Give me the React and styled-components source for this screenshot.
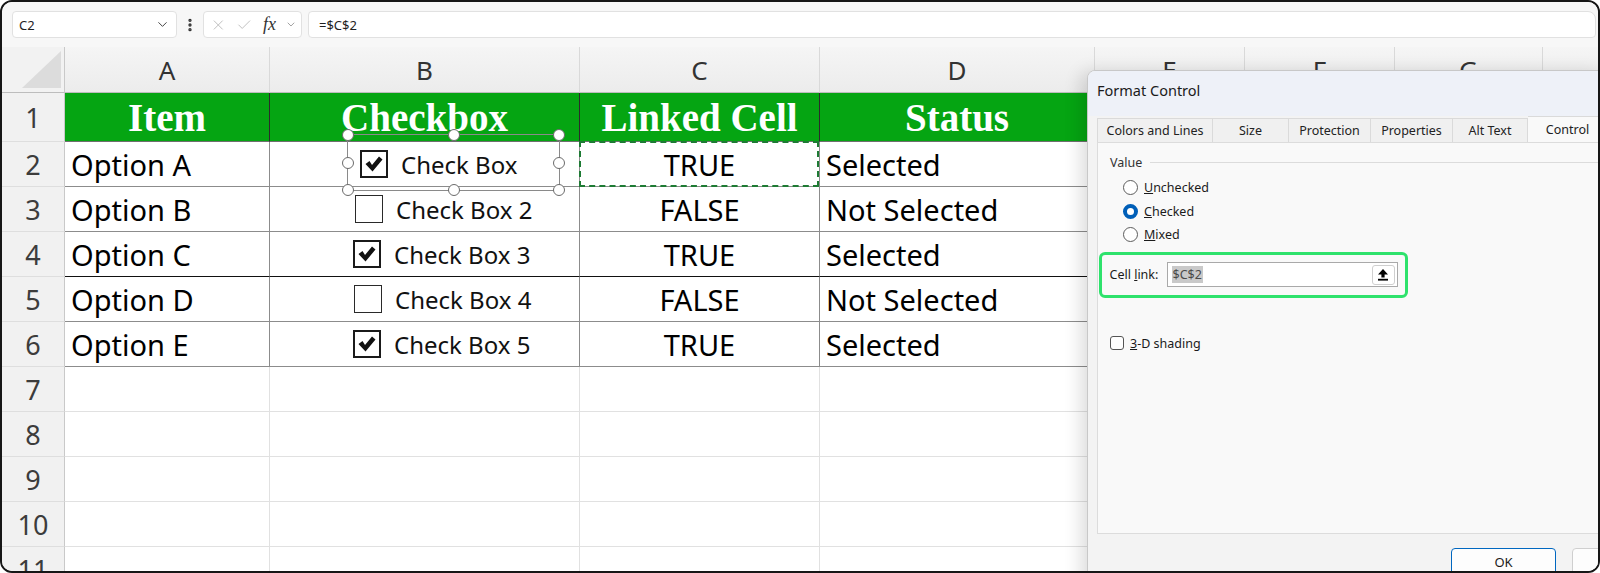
import React from "react";
import styled, { createGlobalStyle } from "styled-components";
import { ChevronDown, EllipsisVertical, X, Check } from "lucide-react";

const GlobalStyle = createGlobalStyle`
  html, body {
    margin: 0;
    padding: 0;
    background: #fff;
  }
  body {
    font-family: "Noto Sans", "Open Sans", sans-serif;
  }
  * {
    box-sizing: border-box;
  }
`;

const Frame = styled.div`
  position: relative;
  width: 1600px;
  height: 573px;
  border: 2px solid #161616;
  border-radius: 12px;
  overflow: hidden;
  background: #fff;
`;

/* ---------- formula bar ---------- */

const FormulaBar = styled.div`
  display: flex;
  align-items: center;
  height: 45px;
  padding: 0 0 0 10px;
  background: #f7f7f7;
  font-size: 13px;
  color: #1f1f1f;
`;

const Field = styled.div`
  display: flex;
  align-items: center;
  height: 27px;
  background: #fff;
  border: 1px solid #e1e1e1;
  border-radius: 4px;
`;

const NameBox = styled(Field)`
  width: 165px;
  padding: 0 6px;
  justify-content: space-between;
`;

const Dots = styled.div`
  width: 26px;
  display: flex;
  justify-content: center;
  color: #333;
`;

const FxBox = styled(Field)`
  width: 99px;
  padding: 0 4px 0 6px;
  gap: 9px;
  color: #b8b8b8;
`;

const Fx = styled.span`
  font-family: "Liberation Serif", serif;
  font-style: italic;
  font-size: 18px;
  color: #333;
  margin-left: 2px;
`;

const FormulaInput = styled(Field)`
  flex: 1;
  margin: 0 2px 0 6px;
  border-radius: 4px 8px 4px 4px;
  padding-left: 10px;
`;

/* ---------- sheet ---------- */

const Sheet = styled.div`
  display: grid;
  grid-template-columns: 63px 205px 310px 240px 275px 150px 150px 148px 150px;
  grid-template-rows: 46px 49px repeat(10, 45px);
`;

const Corner = styled.div`
  position: relative;
  background: #f2f2f2;
  border-right: 1px solid #c9c9c9;
  border-bottom: 1px solid #bdbdbd;

  &::after {
    content: "";
    position: absolute;
    right: 3px;
    bottom: 4px;
    width: 39px;
    height: 37px;
    background: #dcdcdc;
    clip-path: polygon(100% 0, 100% 100%, 0 100%);
  }
`;

const ColHead = styled.div`
  display: flex;
  align-items: center;
  justify-content: center;
  background: linear-gradient(#f5f5f5, #ececec);
  border-right: 1px solid #d9d9d9;
  border-bottom: 1px solid #bdbdbd;
  font-size: 26px;
  color: #333;
`;

const RowNum = styled.div`
  display: flex;
  align-items: center;
  justify-content: center;
  background: #f1f1f1;
  border-right: 1px solid #c9c9c9;
  border-bottom: 1px solid #dedede;
  font-size: 27px;
  color: #3c3c3c;
`;

const HeadCell = styled.div`
  display: flex;
  align-items: center;
  justify-content: center;
  background: #05a512;
  border-right: 1px solid #2b2b2b;
  border-bottom: 1px solid #6f6f6f;
  font-family: "Liberation Serif", "DejaVu Serif", serif;
  font-weight: 700;
  font-size: 39px;
  color: #fff;
  white-space: nowrap;
`;

const Cell = styled.div`
  position: relative;
  display: flex;
  align-items: center;
  justify-content: ${({ $center }) => ($center ? "center" : "flex-start")};
  padding-left: ${({ $center }) => ($center ? "0" : "6px")};
  border-right: 1px solid ${({ $table }) => ($table ? "#8c8c8c" : "#e1e1e1")};
  border-bottom: 1px solid
    ${({ $table, $dark }) => ($dark ? "#111" : $table ? "#8c8c8c" : "#e1e1e1")};
  font-size: 29px;
  color: #000;
  white-space: nowrap;
`;

const CheckCell = styled(Cell)`
  padding-left: ${({ $indent }) => $indent}px;
  gap: 13px;
  font-size: 24px;
  color: #111;
`;

const Box = styled.span`
  width: 28px;
  height: 28px;
  flex: none;
  display: flex;
  align-items: center;
  justify-content: center;
  border: ${({ $on }) => ($on ? "2px solid #1a1a1a" : "1.5px solid #2a2a2a")};
  background: #fff;
`;

const Selection = styled.div`
  position: absolute;
  left: 77px;
  top: -8px;
  width: 213px;
  height: 57px;
  border: 1px solid #8a8a8a;
  pointer-events: none;
`;

const Handle = styled.span`
  position: absolute;
  left: ${({ $x }) => $x}%;
  top: ${({ $y }) => $y}%;
  width: 12px;
  height: 12px;
  border-radius: 50%;
  background: #fff;
  border: 1.5px solid #6b6b6b;
  transform: translate(-50%, -50%);
`;

const Marquee = styled.div`
  position: absolute;
  inset: -1px 0 -1px -1px;
  border: 2px dashed #1e7b34;
`;

/* ---------- dialog ---------- */

const Dialog = styled.div`
  position: absolute;
  left: 1085px;
  top: 68px;
  width: 520px;
  height: 520px;
  background: #f3f3f3;
  border: 1px solid #c8c8c8;
  border-radius: 8px 0 0 0;
  box-shadow: -6px 2px 18px rgba(0, 0, 0, 0.14);
  font-size: 12.5px;
  color: #1b1b1b;
  overflow: hidden;
`;

const TitleBar = styled.div`
  height: 45px;
  padding: 9px 0 0 9px;
  background: #eef1f8;
  font-size: 14.5px;
`;

const DialogBody = styled.div`
  padding-left: 9px;
`;

const Tabs = styled.div`
  display: flex;
  align-items: flex-end;
  height: 26px;
`;

const Tab = styled.div`
  width: ${({ $w }) => $w}px;
  height: ${({ $active }) => ($active ? 26 : 24)}px;
  flex: none;
  display: flex;
  align-items: center;
  justify-content: center;
  background: ${({ $active }) => ($active ? "#f9f9f9" : "#f0f0f0")};
  border: 1px solid #dadada;
  border-bottom: none;
  border-left-width: ${({ $first }) => ($first ? 1 : 0)}px;
  color: #222;
`;

const Panel = styled.div`
  height: 392px;
  padding: 11px 0 0 12px;
  background: #f9f9f9;
  border: 1px solid #dcdcdc;
`;

const Legend = styled.div`
  display: flex;
  align-items: center;
  gap: 8px;
  color: #333;

  &::after {
    content: "";
    flex: 1;
    height: 1px;
    background: #dcdcdc;
  }
`;

const RadioList = styled.div`
  margin: 5px 0 0 13px;
`;

const RadioRow = styled.div`
  display: flex;
  align-items: center;
  gap: 6px;
  height: 23.5px;
`;

const Radio = styled.span`
  width: 15px;
  height: 15px;
  border-radius: 50%;
  background: #fff;
  border: ${({ $on }) => ($on ? "4.5px solid #005fb8" : "1px solid #5c5c5c")};
`;

const LinkBox = styled.div`
  display: flex;
  align-items: center;
  width: 309px;
  height: 46px;
  margin: 5px 0 0 -11px;
  padding-left: 7.5px;
  border: 3.5px solid #2ee26c;
  border-radius: 6px;
`;

const LinkLabel = styled.span`
  width: 57px;
`;

const LinkInput = styled.div`
  display: flex;
  align-items: center;
  justify-content: space-between;
  width: 231px;
  height: 25px;
  padding: 0 2px 0 4px;
  background: #fff;
  border: 1px solid #a9a9a9;
`;

const Picked = styled.span`
  background: #c9c9c9;
  color: #4a4a4a;
  padding: 0 1px;
`;

const PickButton = styled.span`
  width: 23px;
  height: 20px;
  display: flex;
  align-items: center;
  justify-content: center;
  border: 1px solid #cfcfcf;
  border-radius: 3px;
  background: #fff;
`;

const ShadeRow = styled.div`
  display: flex;
  align-items: center;
  gap: 6px;
  margin-top: 37px;
`;

const SmallBox = styled.span`
  width: 14px;
  height: 14px;
  border: 1px solid #555;
  border-radius: 3px;
  background: #fff;
`;

const Footer = styled.div`
  display: flex;
  gap: 16px;
  padding: 14px 0 0 354px;
`;

const Button = styled.div`
  flex: none;
  width: 105px;
  height: 28px;
  display: flex;
  align-items: center;
  justify-content: center;
  background: #fdfdfd;
  border: 1px solid ${({ $primary }) => ($primary ? "#0067c0" : "#cfcfcf")};
  border-radius: 4px;
  font-size: 13px;
`;

const letters = ["A", "B", "C", "D", "E", "F", "G", "H"];
const heads = ["Item", "Checkbox", "Linked Cell", "Status"];

const rows = [
  { item: "Option A", box: "Check Box", on: true, linked: "TRUE", status: "Selected", indent: 90 },
  { item: "Option B", box: "Check Box 2", on: false, linked: "FALSE", status: "Not Selected", indent: 85 },
  { item: "Option C", box: "Check Box 3", on: true, linked: "TRUE", status: "Selected", indent: 83 },
  { item: "Option D", box: "Check Box 4", on: false, linked: "FALSE", status: "Not Selected", indent: 84 },
  { item: "Option E", box: "Check Box 5", on: true, linked: "TRUE", status: "Selected", indent: 83 },
];

const tabs = [
  ["Colors and Lines", 116],
  ["Size", 76],
  ["Protection", 82],
  ["Properties", 82],
  ["Alt Text", 75],
  ["Control", 80],
];

const handles = [
  [0, 0], [50, 0], [100, 0],
  [0, 50], [100, 50],
  [0, 100], [50, 100], [100, 100],
];

function Tick() {
  return (
    <svg width="22" height="22" viewBox="0 0 22 22">
      <path d="M2.5 11 L6.5 8 L9 12 L16 3.5 L19.5 6.5 L9.5 18.5 Z" fill="#111" />
    </svg>
  );
}

function PickIcon() {
  return (
    <svg width="12" height="13" viewBox="0 0 12 13">
      <path d="M6 1 L11 6.5 L7.6 6.5 L7.6 9.5 L4.4 9.5 L4.4 6.5 L1 6.5 Z" fill="#000" />
      <rect x="1" y="10.8" width="10" height="1.8" fill="#000" />
    </svg>
  );
}

function EmptyCells() {
  return letters.slice(4).map((l) => <Cell key={l} />);
}

export default function App() {
  return (
    <>
      <GlobalStyle />
      <Frame>
        <FormulaBar>
          <NameBox>
            <span>C2</span>
            <ChevronDown size={15} color="#444" strokeWidth={1.6} />
          </NameBox>
          <Dots>
            <EllipsisVertical size={16} strokeWidth={3} />
          </Dots>
          <FxBox>
            <X size={18} strokeWidth={1.3} />
            <Check size={18} strokeWidth={1.3} />
            <Fx>fx</Fx>
            <ChevronDown size={13} color="#777" strokeWidth={1.4} />
          </FxBox>
          <FormulaInput>=$C$2</FormulaInput>
        </FormulaBar>

        <Sheet>
          <Corner />
          {letters.map((l) => (
            <ColHead key={l}>{l}</ColHead>
          ))}

          <RowNum>1</RowNum>
          {heads.map((h) => (
            <HeadCell key={h}>{h}</HeadCell>
          ))}
          <EmptyCells />

          {rows.map((r, i) => (
            <React.Fragment key={r.item}>
              <RowNum>{i + 2}</RowNum>
              <Cell $table $dark={i === 2}>{r.item}</Cell>
              <CheckCell $table $dark={i === 2} $indent={r.indent}>
                <Box $on={r.on}>{r.on && <Tick />}</Box>
                {r.box}
                {i === 0 && (
                  <Selection>
                    {handles.map(([x, y]) => (
                      <Handle key={`${x}-${y}`} $x={x} $y={y} />
                    ))}
                  </Selection>
                )}
              </CheckCell>
              <Cell $table $dark={i === 2} $center>
                {r.linked}
                {i === 0 && <Marquee />}
              </Cell>
              <Cell $table $dark={i === 2}>{r.status}</Cell>
              <EmptyCells />
            </React.Fragment>
          ))}

          {[7, 8, 9, 10, 11].map((n) => (
            <React.Fragment key={n}>
              <RowNum>{n}</RowNum>
              {letters.map((l) => (
                <Cell key={l} />
              ))}
            </React.Fragment>
          ))}
        </Sheet>

        <Dialog>
          <TitleBar>Format Control</TitleBar>
          <DialogBody>
            <Tabs>
              {tabs.map(([t, w], i) => (
                <Tab key={t} $w={w} $first={i === 0} $active={t === "Control"}>
                  {t}
                </Tab>
              ))}
            </Tabs>
            <Panel>
              <Legend>Value</Legend>
              <RadioList>
                <RadioRow>
                  <Radio />
                  <span><u>U</u>nchecked</span>
                </RadioRow>
                <RadioRow>
                  <Radio $on />
                  <span><u>C</u>hecked</span>
                </RadioRow>
                <RadioRow>
                  <Radio />
                  <span><u>M</u>ixed</span>
                </RadioRow>
              </RadioList>
              <LinkBox>
                <LinkLabel>Cell <u>l</u>ink:</LinkLabel>
                <LinkInput>
                  <Picked>$C$2</Picked>
                  <PickButton>
                    <PickIcon />
                  </PickButton>
                </LinkInput>
              </LinkBox>
              <ShadeRow>
                <SmallBox />
                <span><u>3</u>-D shading</span>
              </ShadeRow>
            </Panel>
            <Footer>
              <Button $primary>OK</Button>
              <Button>Cancel</Button>
            </Footer>
          </DialogBody>
        </Dialog>
      </Frame>
    </>
  );
}
